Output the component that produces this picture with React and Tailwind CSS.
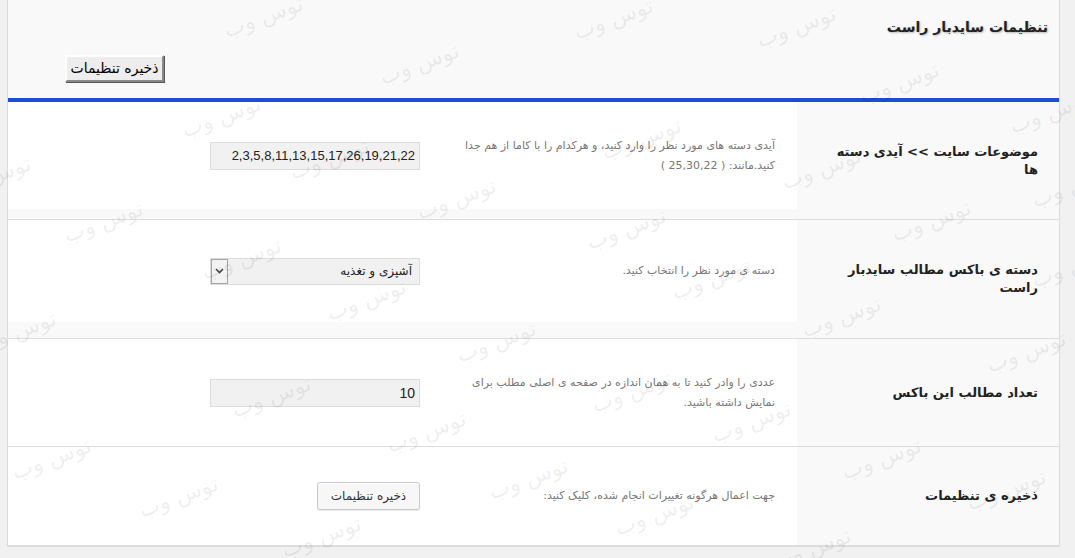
import React from 'react'

const fa = { fontFamily: '"DejaVu Sans", sans-serif' }

const MARKS = [
  [572, 2], [755, 10], [222, 0], [378, 47], [858, 66], [1008, 96], [600, 122], [288, 142],
  [780, 152], [62, 205], [415, 182], [585, 212], [890, 204], [1030, 170], [670, 262], [200, 242],
  [325, 283], [800, 300], [-25, 315], [455, 325], [985, 335], [590, 375], [230, 380], [710, 405],
  [385, 415], [10, 442], [137, 480], [487, 462], [613, 498], [280, 520], [840, 442], [965, 473],
  [770, 532], [180, 100], [-50, 160], [1030, 250],
]

function Row({ label, desc, children, band, h }) {
  return (
    <div className={`flex border-b border-[#dcdcdc] ${h}`}>
      <div className="w-[262px] shrink-0 bg-[#f9f9f9] flex items-center pr-[21px]">
        <div className="w-[212px] text-[13px] leading-[18px] font-bold text-[#222]" style={fa}>{label}</div>
      </div>
      <div className="flex-1 flex flex-col">
        <div className="flex-1 flex items-center bg-white">
          <div className="w-[377px] shrink-0 pr-[22px] pl-[36px] text-[11px] leading-[20px] text-[#777]" style={fa}>{desc}</div>
          <div>{children}</div>
        </div>
        {band && <div className={`${band} bg-[#f9f9f9]`} />}
      </div>
    </div>
  )
}

const inputCls = 'w-[210px] h-[28px] bg-[#f1f1f1] border border-[#dcdcdc] text-right px-[4px] text-[#222] outline-none'

export default function App() {
  return (
    <div className="relative h-[558px] overflow-hidden bg-[#f1f1f1]">
      <div dir="rtl" className="ml-[7px] w-[1053px] bg-white border-x border-b border-[#dcdcdc]">
        {/* header */}
        <div className="h-[98px] bg-[#f9f9f9]">
          <div className="pt-[17px] pr-[11px] text-[14px] leading-[20px] font-bold text-[#222] [text-shadow:1px_1px_2px_rgba(0,0,0,0.25)]" style={fa}>
            تنظیمات سایدبار راست
          </div>
          <div dir="ltr" className="pl-[57px] mt-[18px]">
            <button
              dir="rtl"
              className="h-[27px] w-[99px] bg-[#ededed] border-2 border-t-white border-l-white border-r-[#8a8a8a] border-b-[#8a8a8a] shadow-[1px_1px_0_#555] text-[14px] font-normal text-black"
              style={fa}
            >
              ذخیره تنظیمات
            </button>
          </div>
        </div>
        <div className="h-[4px] bg-[#1c4dd2]" />

        <Row
          h="h-[118px]"
          band="h-[10px]"
          label="موضوعات سایت >> آیدی دسته ها"
          desc="آیدی دسته های مورد نظر را وارد کنید، و هرکدام را با کاما از هم جدا کنید.مانند: ( 25,30,22 )"
        >
          <input readOnly value="2,3,5,8,11,13,15,17,26,19,21,22" className={`${inputCls} text-[13px]`} style={{ fontFamily: '"Liberation Sans", sans-serif' }} />
        </Row>

        <Row
          h="h-[119px]"
          band="h-[16px]"
          label="دسته ی باکس مطالب سایدبار راست"
          desc="دسته ی مورد نظر را انتخاب کنید."
        >
          <div className="w-[210px] h-[27px] bg-[#f1f1f1] border border-[#dcdcdc] flex items-center justify-between">
            <span className="pr-[7px] text-[12px] text-[#222]" style={fa}>آشپزی و تغذیه</span>
            <span className="h-[25px] w-[17px] border border-[#a5a5a5] bg-[#f3f3f3] flex items-center justify-center">
              <svg width="9" height="6" viewBox="0 0 9 6"><path d="M1 1l3.5 3.5L8 1" fill="none" stroke="#444" strokeWidth="1.6" /></svg>
            </span>
          </div>
        </Row>

        <Row
          h="h-[108px]"
          label="تعداد مطالب این باکس"
          desc="عددی را وادر کنید تا به همان اندازه در صفحه ی اصلی مطلب برای نمایش داشته باشید."
        >
          <input readOnly value="10" className={`${inputCls} text-[14px]`} style={{ fontFamily: '"Liberation Sans", sans-serif' }} />
        </Row>

        <Row
          h="h-[99px]"
          label="ذخیره ی تنظیمات"
          desc="جهت اعمال هرگونه تغییرات انجام شده، کلیک کنید:"
        >
          <button
            className="h-[28px] w-[103px] rounded-[3px] border border-[#c8c8c8] bg-[#f7f7f7] shadow-[inset_0_1px_0_#fff,0_1px_0_rgba(0,0,0,0.08)] text-[12px] text-[#333]"
            style={fa}
          >
            ذخیره تنظیمات
          </button>
        </Row>
      </div>

      {/* watermark */}
      <div className="pointer-events-none absolute inset-0">
        {MARKS.map(([x, y], i) => (
          <span
            key={i}
            dir="rtl"
            className="absolute text-[22px] whitespace-nowrap text-black/[0.08] -rotate-[20deg]"
            style={{ ...fa, left: x, top: y }}
          >
            توس وب
          </span>
        ))}
      </div>
    </div>
  )
}
